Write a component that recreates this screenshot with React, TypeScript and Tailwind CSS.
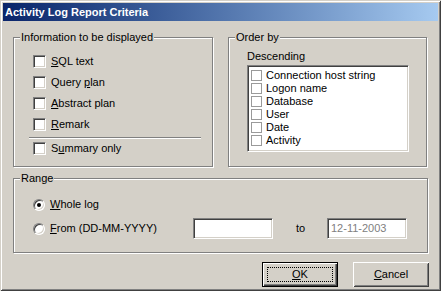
import React from "react";

const font = { fontFamily: '"Liberation Sans", Arial, sans-serif' };

const U = ({ children }: { children: React.ReactNode }) => <span className="underline underline-offset-1">{children}</span>;

const CheckBox = () => (
  <span className="inline-block w-[13px] h-[13px] shrink-0 bg-white border border-t-[#808080] border-l-[#808080] border-b-white border-r-white shadow-[inset_1px_1px_0_#404040,inset_-1px_-1px_0_#d4d0c8]" />
);

const Radio = ({ on }: { on?: boolean }) => (
  <span className="w-[12px] h-[12px] shrink-0 rounded-full bg-white border border-t-[#808080] border-l-[#808080] border-b-white border-r-white shadow-[inset_1px_1px_0_#404040,inset_-1px_-1px_0_#d4d0c8] flex items-center justify-center">
    {on && <span className="w-[4px] h-[4px] rounded-full bg-black" />}
  </span>
);

const Group = ({ title, className, children }: { title: string; className: string; children: React.ReactNode }) => (
  <div className={`relative border border-[#808080] shadow-[1px_1px_0_#fff,inset_1px_1px_0_#fff] ${className}`}>
    <span className="absolute -top-[8px] left-[6px] bg-[#d4d0c8] px-[1px] leading-[14px]">{title}</span>
    {children}
  </div>
);

const CheckRow = ({ children }: { children: React.ReactNode }) => (
  <div className="flex items-center gap-[5px] h-[13px]">
    <CheckBox />
    <span>{children}</span>
  </div>
);

const orderItems = ["Connection host string", "Logon name", "Database", "User", "Date", "Activity"];

export default function App() {
  return (
    <div
      className="w-[441px] h-[291px] bg-[#d4d0c8] text-[11px] text-black p-[3px] shadow-[inset_1px_1px_0_#d4d0c8,inset_-1px_-1px_0_#404040,inset_2px_2px_0_#fff,inset_-2px_-2px_0_#808080]"
      style={font}
    >
      {/* Title bar */}
      <div className="h-[18px] bg-gradient-to-r from-[#0a246a] to-[#a6caf0] flex items-center pl-[2px]">
        <span className="text-white font-bold text-[11px]">Activity Log Report Criteria</span>
      </div>

      <div className="pl-[10px] pt-[16px]">
        <div className="flex gap-[15px]">
          {/* Information */}
          <Group title="Information to be displayed" className="w-[200px] h-[130px]">
            <div className="pl-[19px] pt-[17px] flex flex-col gap-[8px]">
              <CheckRow><U>S</U>QL text</CheckRow>
              <CheckRow>Query <U>p</U>lan</CheckRow>
              <CheckRow><U>A</U>bstract plan</CheckRow>
              <CheckRow><U>R</U>emark</CheckRow>
            </div>
            <div className="ml-[15px] mr-[11px] mt-[6px] h-[2px] border-t border-[#808080] border-b border-b-white" />
            <div className="pl-[19px] pt-[3px]">
              <CheckRow>S<U>u</U>mmary only</CheckRow>
            </div>
          </Group>

          {/* Order by */}
          <Group title="Order by" className="w-[199px] h-[130px]">
            <div className="pl-[18px] pt-[12px] leading-[13px]">Descending</div>
            <div className="ml-[18px] mt-[2px] w-[162px] h-[87px] bg-white border border-t-[#808080] border-l-[#808080] border-b-white border-r-white shadow-[inset_1px_1px_0_#404040,inset_-1px_-1px_0_#d4d0c8] pt-[3px] pl-[3px]">
              {orderItems.map((t) => (
                <div key={t} className="flex items-center gap-[4px] h-[13px] leading-[13px]">
                  <span className="w-[11px] h-[11px] border border-[#9a9a9a] bg-white shrink-0" />
                  <span>{t}</span>
                </div>
              ))}
            </div>
          </Group>
        </div>

        {/* Range */}
        <Group title="Range" className="mt-[11px] w-[415px] h-[75px]">
          <div className="pl-[19px] pt-[19px] flex items-center gap-[5px] h-[13px] box-content">
            <Radio on />
            <span><U>W</U>hole log</span>
          </div>
          <div className="pl-[19px] mt-[7px] flex items-center">
            <div className="flex items-center gap-[5px] w-[160px]">
              <Radio />
              <span><U>F</U>rom (DD-MM-YYYY)</span>
            </div>
            <div className="w-[80px] h-[21px] bg-white border border-t-[#808080] border-l-[#808080] border-b-white border-r-white shadow-[inset_1px_1px_0_#404040,inset_-1px_-1px_0_#d4d0c8]" />
            <span className="ml-[23px] w-[31px]">to</span>
            <div className="w-[80px] h-[21px] bg-white border border-t-[#808080] border-l-[#808080] border-b-white border-r-white shadow-[inset_1px_1px_0_#404040,inset_-1px_-1px_0_#d4d0c8] flex items-center pl-[3px] text-[#808080]">
              12-11-2003
            </div>
          </div>
        </Group>

        {/* Buttons */}
        <div className="mt-[9px] flex gap-[15px] pl-[249px]">
          <button className="w-[76px] h-[25px] border border-black bg-[#d4d0c8] shadow-[inset_1px_1px_0_#fff,inset_-1px_-1px_0_#404040,inset_-2px_-2px_0_#808080] flex items-center justify-center p-[4px]">
            <span className="w-full h-full border border-dotted border-black flex items-center justify-center">
              <U>O</U>K
            </span>
          </button>
          <button className="w-[76px] h-[25px] bg-[#d4d0c8] shadow-[inset_1px_1px_0_#fff,inset_-1px_-1px_0_#404040,inset_2px_2px_0_#d4d0c8,inset_-2px_-2px_0_#808080] flex items-center justify-center">
            <span><U>C</U>ancel</span>
          </button>
        </div>
      </div>
    </div>
  );
}
